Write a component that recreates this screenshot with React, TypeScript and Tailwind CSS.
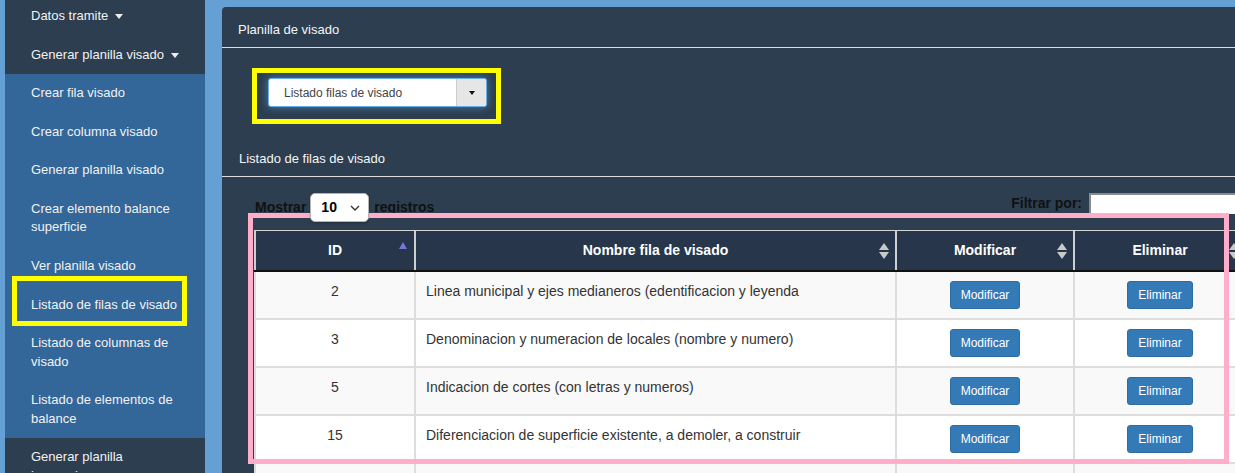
import React from "react";

const rows = [
  { id: "2", name: "Linea municipal y ejes medianeros (edentificacion y leyenda" },
  { id: "3", name: "Denominacion y numeracion de locales (nombre y numero)" },
  { id: "5", name: "Indicacion de cortes (con letras y numeros)" },
  { id: "15", name: "Diferenciacion de superficie existente, a demoler, a construir" },
];

function Caret() {
  return (
    <span className="inline-block w-0 h-0 ml-[7px] align-middle border-t-[5px] border-t-[#eeeeee] border-x-[4px] border-x-transparent" />
  );
}

function SortBoth() {
  return (
    <svg width="10" height="16" viewBox="0 0 10 16" className="absolute right-[6px] top-1/2 -translate-y-1/2">
      <path d="M5 0 L10 7 L0 7 Z" fill="#c9c9c9" />
      <path d="M5 16 L10 9 L0 9 Z" fill="#c9c9c9" />
    </svg>
  );
}

function SortUp() {
  return (
    <svg width="8" height="7" viewBox="0 0 8 7" className="absolute right-[7px] top-[11px]">
      <path d="M4 0 L8 7 L0 7 Z" fill="#7676d6" />
    </svg>
  );
}

function SideItem({ children }: { children: React.ReactNode }) {
  return <div className="py-[10px] pl-[26px] pr-[15px]">{children}</div>;
}

const cols = ["w-[160px]", "w-[481px]", "w-[178px]", "w-[172px]", "w-[100px]"];

export default function App() {
  return (
    <div className="relative w-[1235px] h-[473px] overflow-hidden bg-[#64a0d4] flex font-['Liberation_Sans',Arial,sans-serif]">
      {/* Sidebar */}
      <aside className="ml-[5px] w-[200px] shrink-0 flex flex-col -mt-[3px] text-[13px] leading-[1.42857] text-[#f2f2f2]">
        <div className="bg-[#2c3e50]">
          <SideItem>
            Datos tramite
            <Caret />
          </SideItem>
          <SideItem>
            Generar planilla visado
            <Caret />
          </SideItem>
        </div>
        <div className="bg-[#336699]">
          <SideItem>Crear fila visado</SideItem>
          <SideItem>Crear columna visado</SideItem>
          <SideItem>Generar planilla visado</SideItem>
          <SideItem>Crear elemento balance superficie</SideItem>
          <SideItem>Ver planilla visado</SideItem>
          <SideItem>Listado de filas de visado</SideItem>
          <SideItem>Listado de columnas de visado</SideItem>
          <SideItem>Listado de elementos de balance</SideItem>
        </div>
        <div className="bg-[#2c3e50] flex-1">
          <SideItem>
            Generar planilla
            <br />
            inspeccion
          </SideItem>
        </div>
      </aside>

      {/* Main */}
      <main className="ml-[17px] flex-1 min-w-0 pt-[7px]">
        <div className="bg-[#2c3e50] rounded-tl-[4px] h-full w-[1100px]">
          <div className="h-[41px] border-b border-[#dddddd] pt-[6px] pl-[16px] flex items-center text-[13px] text-[#f5f5f5]">
            Planilla de visado
          </div>

          <div className="ml-[30px] mt-[20px] w-[249px] h-[56px] border-[5px] border-[#ffff00] pl-[11px] pt-[5px]">
            <div className="w-[219px] h-[29px] flex bg-white border border-[#66afe9] rounded-[3px] shadow-[0_0_8px_rgba(102,175,233,0.6)] overflow-hidden">
              <div className="flex-1 flex items-center pl-[15px] text-[12px] text-[#444444]">Listado filas de visado</div>
              <div className="w-[30px] bg-[#e6e6e6] border-l border-[#cccccc] flex items-center justify-center">
                <span className="inline-block w-0 h-0 border-t-[4px] border-t-[#111111] border-x-[3.5px] border-x-transparent" />
              </div>
            </div>
          </div>

          <div className="h-[53px] border-b border-[#dddddd] pt-[17px] pl-[17px] flex items-center text-[13px] text-[#f5f5f5]">
            Listado de filas de visado
          </div>

          <div className="mt-[16px] pl-[33px] flex items-start w-[1037px] text-[14px] font-bold text-[#111111]">
            <div className="flex items-center h-[29px]">
              <span>Mostrar</span>
              <div className="relative z-10 ml-[4px] w-[59px] h-[29px] bg-white border border-[#b5b5b5] rounded-[5px] shadow-[0_1px_2px_rgba(0,0,0,0.25)] flex items-center pl-[10px] pr-[8px] justify-between">
                <span className="text-black">10</span>
                <svg width="10" height="6" viewBox="0 0 10 6">
                  <path d="M1 1 L5 5 L9 1" fill="none" stroke="#333" strokeWidth="1.4" />
                </svg>
              </div>
              <span className="ml-[5px]">registros</span>
            </div>
            <div className="ml-auto flex items-center h-[21px]">
              <span>Filtrar por:</span>
              <div className="ml-[7px] w-[170px] h-[21px] bg-white border-t-2 border-l-2 border-[#8a8a8a]" />
            </div>
          </div>

          {/* Table */}
          <div className="mt-[8px] ml-[32px] w-[1093px] text-[14px]">
            <div className="flex h-[42px] bg-[#27364a] border-t border-[#d5d5d5] border-b-2 border-b-[#111111] text-white font-bold">
              {["ID", "Nombre fila de visado", "Modificar", "Eliminar", ""].map((h, i) => (
                <div key={i} className={`${cols[i]} shrink-0 relative border-l-2 border-[#cfcfcf] flex items-center justify-center`}>
                  {h}
                  {i === 0 ? <SortUp /> : i < 4 ? <SortBoth /> : null}
                </div>
              ))}
            </div>
            {rows.map((r, idx) => (
              <div
                key={r.id}
                className={`flex h-[48px] border-b-2 border-[#dddddd] text-[#333333] leading-[20px] ${idx % 2 === 0 ? "bg-[#f9f9f9]" : "bg-white"}`}
              >
                <div className={`${cols[0]} shrink-0 border-l-2 border-[#dddddd] pt-[9px] text-center`}>{r.id}</div>
                <div className={`${cols[1]} shrink-0 border-l-2 border-[#dddddd] pt-[9px] pl-[10px]`}>{r.name}</div>
                <div className={`${cols[2]} shrink-0 border-l-2 border-[#dddddd] pt-[9px] flex justify-center items-start`}>
                  <button className="h-[28px] px-[10px] bg-[#337ab7] border border-[#2e6da4] rounded-[3px] text-[12px] text-white">Modificar</button>
                </div>
                <div className={`${cols[3]} shrink-0 border-l-2 border-[#dddddd] pt-[9px] flex justify-center items-start`}>
                  <button className="h-[28px] px-[10px] bg-[#337ab7] border border-[#2e6da4] rounded-[3px] text-[12px] text-white">Eliminar</button>
                </div>
                <div className={`${cols[4]} shrink-0 border-l-2 border-[#dddddd]`} />
              </div>
            ))}
            <div className="flex h-[48px] bg-[#f9f9f9]">
              {cols.map((c, i) => (
                <div key={i} className={`${c} shrink-0 border-l-2 border-[#dddddd]`} />
              ))}
            </div>
          </div>
        </div>
      </main>

      {/* Annotation overlays */}
      <div className="absolute left-[12px] top-[276px] w-[175px] h-[50px] border-[5px] border-[#ffff00] pointer-events-none" />
      <div className="absolute left-[248px] top-[213px] w-[981px] h-[251px] border-[5px] border-[#ffadc9] pointer-events-none" />
    </div>
  );
}
